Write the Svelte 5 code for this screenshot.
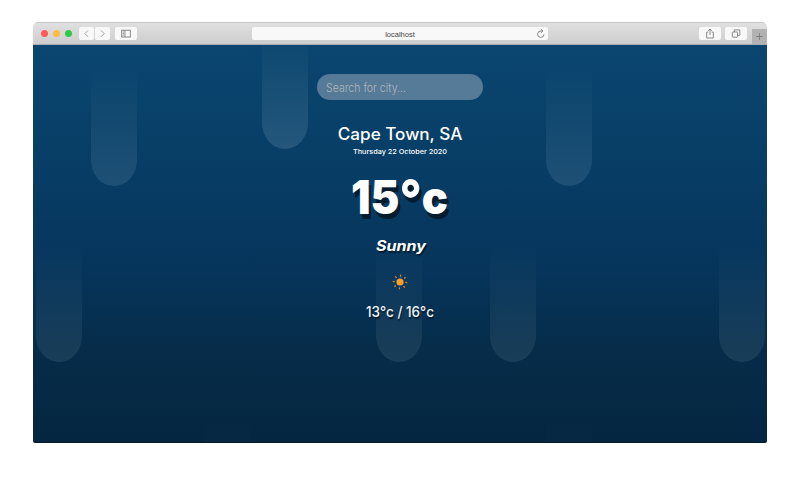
<script>
  const drops = [
    { x: 58, y: 21, h: 120, a: 0.12 },
    { x: 229, y: -15, h: 119, a: 0.15 },
    { x: 513, y: 21, h: 120, a: 0.12 },
    { x: 2.5, y: 197, h: 119.5, a: 0.1 },
    { x: 343, y: 197, h: 119.5, a: 0.1 },
    { x: 457, y: 197, h: 119.5, a: 0.1 },
    { x: 685.5, y: 197, h: 119.5, a: 0.1 },
    { x: 171, y: 372, h: 120, a: 0.05 },
    { x: 513, y: 372, h: 120, a: 0.05 },
  ];
  const rays = [0, 45, 90, 135, 180, 225, 270, 315];
</script>

<div class="page">
  <div class="window">
    <header class="bar">
      <div class="lights"><i class="red"></i><i class="yellow"></i><i class="green"></i></div>
      <div class="nav">
        <span class="btn small"><svg width="15" height="13" viewBox="0 0 15 13"><path d="M9 3.4 5.8 6.6 9 9.8" /></svg></span>
        <span class="btn small"><svg width="15" height="13" viewBox="0 0 15 13"><path d="M6 3.4 9.2 6.6 6 9.8" /></svg></span>
      </div>
      <span class="btn side"><svg class="dark" width="22" height="13" viewBox="0 0 22 13"><rect x="6.7" y="3.2" width="8.6" height="6.8" /><path d="M9.9 3.2V10M7.7 5h1.2M7.7 6.6h1.2M7.7 8.2h1.2" /></svg></span>
      <div class="address">
        <span>localhost</span>
        <svg class="dark reload" width="10" height="10" viewBox="0 0 10 10"><path d="M8 5.3A3.2 3.2 0 1 1 5 2H6.5M5 .3 7 2 5 3.8" /></svg>
      </div>
      <span class="btn tool"><svg class="dark" width="22" height="13" viewBox="0 0 22 13"><path d="M9.3 5.1H7.7V11h6.6V5.1h-1.6M11 8V2.1M9.2 3.8 11 2l1.8 1.8" /></svg></span>
      <span class="btn tool"><svg class="dark" width="22" height="13" viewBox="0 0 22 13"><rect x="7.3" y="5" width="5.2" height="5.2" rx=".5" /><path d="M9.3 4.8V2.9h5.5v5.4h-2" /></svg></span>
      <span class="plus"><svg class="dark" width="15" height="15" viewBox="0 0 15 15"><path d="M7.5 4.2v6.6M4.2 7.5h6.6" /></svg></span>
    </header>

    <main>
      {#each drops as d}
        <div class="drop" style="left:{d.x}px;top:{d.y}px;height:{d.h}px;--a:{d.a}"></div>
      {/each}

      <div class="content">
        <div class="search">
          <svg width="166" height="26"><text x="9" y="18" textLength="80" lengthAdjust="spacingAndGlyphs">Search for city...</text></svg>
        </div>
        <svg class="place" width="166" height="44"><text x="20.8" y="39.5" textLength="124.5" lengthAdjust="spacingAndGlyphs">Cape Town, SA</text></svg>
        <svg class="date" width="166" height="14"><text x="36" y="10" textLength="94" lengthAdjust="spacingAndGlyphs">Thursday 22 October 2020</text></svg>
        <svg class="temp" width="166" height="72">
          <text x="34" y="55.5" textLength="97" lengthAdjust="spacingAndGlyphs">15<tspan class="degree" dy="3.5">°</tspan><tspan dy="-3.5">c</tspan></text>
        </svg>
        <svg class="weather" width="166" height="34"><text x="59" y="21" textLength="50" lengthAdjust="spacingAndGlyphs">Sunny</text></svg>
        <svg class="sun" width="20" height="20" viewBox="-10 -10 20 20">
          <circle r="3.6" />
          {#each rays as r}
            <path transform="rotate({r + 5})" d="M0-5.4V-7.3" />
          {/each}
        </svg>
        <svg class="range" width="166" height="40"><text x="49" y="25.5" textLength="68" lengthAdjust="spacingAndGlyphs">13°c / 16°c</text></svg>
      </div>
    </main>
  </div>
</div>

<style>
  :global(body) { background: #fff; }
  .page { height: 487px; padding: 22px 33px 0; box-sizing: border-box; }
  .window { width: 734px; height: 421px; border-radius: 5px 5px 2px 2px; overflow: hidden; }
  .bar {
    display: flex; align-items: center; height: 23px; box-sizing: border-box;
    border-top: 1px solid #c9c9c9; border-bottom: 1px solid #a9adb0;
    background: linear-gradient(#e0e0e0, #cdcdcd);
  }
  .lights { display: flex; gap: 5px; padding-left: 8px; width: 38px; }
  .lights i { width: 7px; height: 7px; border-radius: 50%; }
  .red { background: #fc5b57; }
  .yellow { background: #fdbc40; }
  .green { background: #33c748; }
  .nav { display: flex; gap: 1px; }
  .btn { display: flex; height: 13px; border-radius: 2px; background: #f8f8f8; }
  .small { width: 15px; }
  .side { width: 22px; margin-left: 5px; }
  .tool { width: 22px; margin-right: 4px; }
  svg { display: block; flex: none; fill: none; stroke: #a4a4a4; stroke-width: 1; }
  svg.dark { stroke: #777; stroke-width: .85; }
  .address {
    display: flex; align-items: center; position: relative; width: 296px; height: 13px;
    margin: 0 151px 0 115px; border-radius: 2px; background: #f8f8f8;
    font: 7.5px "Liberation Sans", Arial, sans-serif; color: #444;
  }
  .address span { flex: 1; padding-top: 1px; text-align: center; }
  .reload { position: absolute; right: 2px; top: 2px; }
  .plus { align-self: flex-end; margin-left: auto; height: 15px; width: 15px; background: #b2b2b2; }
  main {
    position: relative; height: 398px; box-sizing: border-box; overflow: hidden;
    border-bottom: 1px solid #051827;
    background: linear-gradient(#0a4670 0%, #073c64 35%, #06345a 58%, #062c49 77%, #052640 100%);
  }
  .drop {
    position: absolute; width: 46px; border-radius: 0 0 23px 23px / 0 0 26px 26px;
    background: linear-gradient(rgba(200, 225, 235, 0), rgba(200, 225, 235, var(--a)));
  }
  .content { position: relative; display: flex; flex-direction: column; align-items: center; padding-top: 29px; }
  .search { width: 166px; height: 26px; border-radius: 13px; background: #557b99; }
  text { fill: #fff; stroke: none; font-family: Inter, sans-serif; }
  .search text { font-size: 12px; font-weight: 300; fill: #b3b5b7; }
  .place, .date, .temp, .weather, .range { overflow: visible; }
  .place text { font-size: 16.6px; font-weight: 450; }
  .date text { font-size: 6.8px; font-weight: 450; }
  .temp { margin-top: -.5px; }
  .temp text { font-size: 46.5px; font-weight: 900; text-shadow: 2.5px 5px 0 #041c2e; }
  .temp .degree { font-size: 52px; font-weight: 800; }
  .weather text { font-size: 14.5px; font-weight: 700; font-style: italic; text-shadow: 1px 2px 1px #041c2e; }
  .sun { margin-top: 8.5px; fill: #f9a02b; stroke: #d8902f; stroke-width: 1.3; }
  .sun circle { stroke: none; }
  .range { margin-top: -1px; }
  .range text { font-size: 14.5px; font-weight: 500; fill: #eef3f7; text-shadow: 1px 2px 1px #041c2e; }
</style>
